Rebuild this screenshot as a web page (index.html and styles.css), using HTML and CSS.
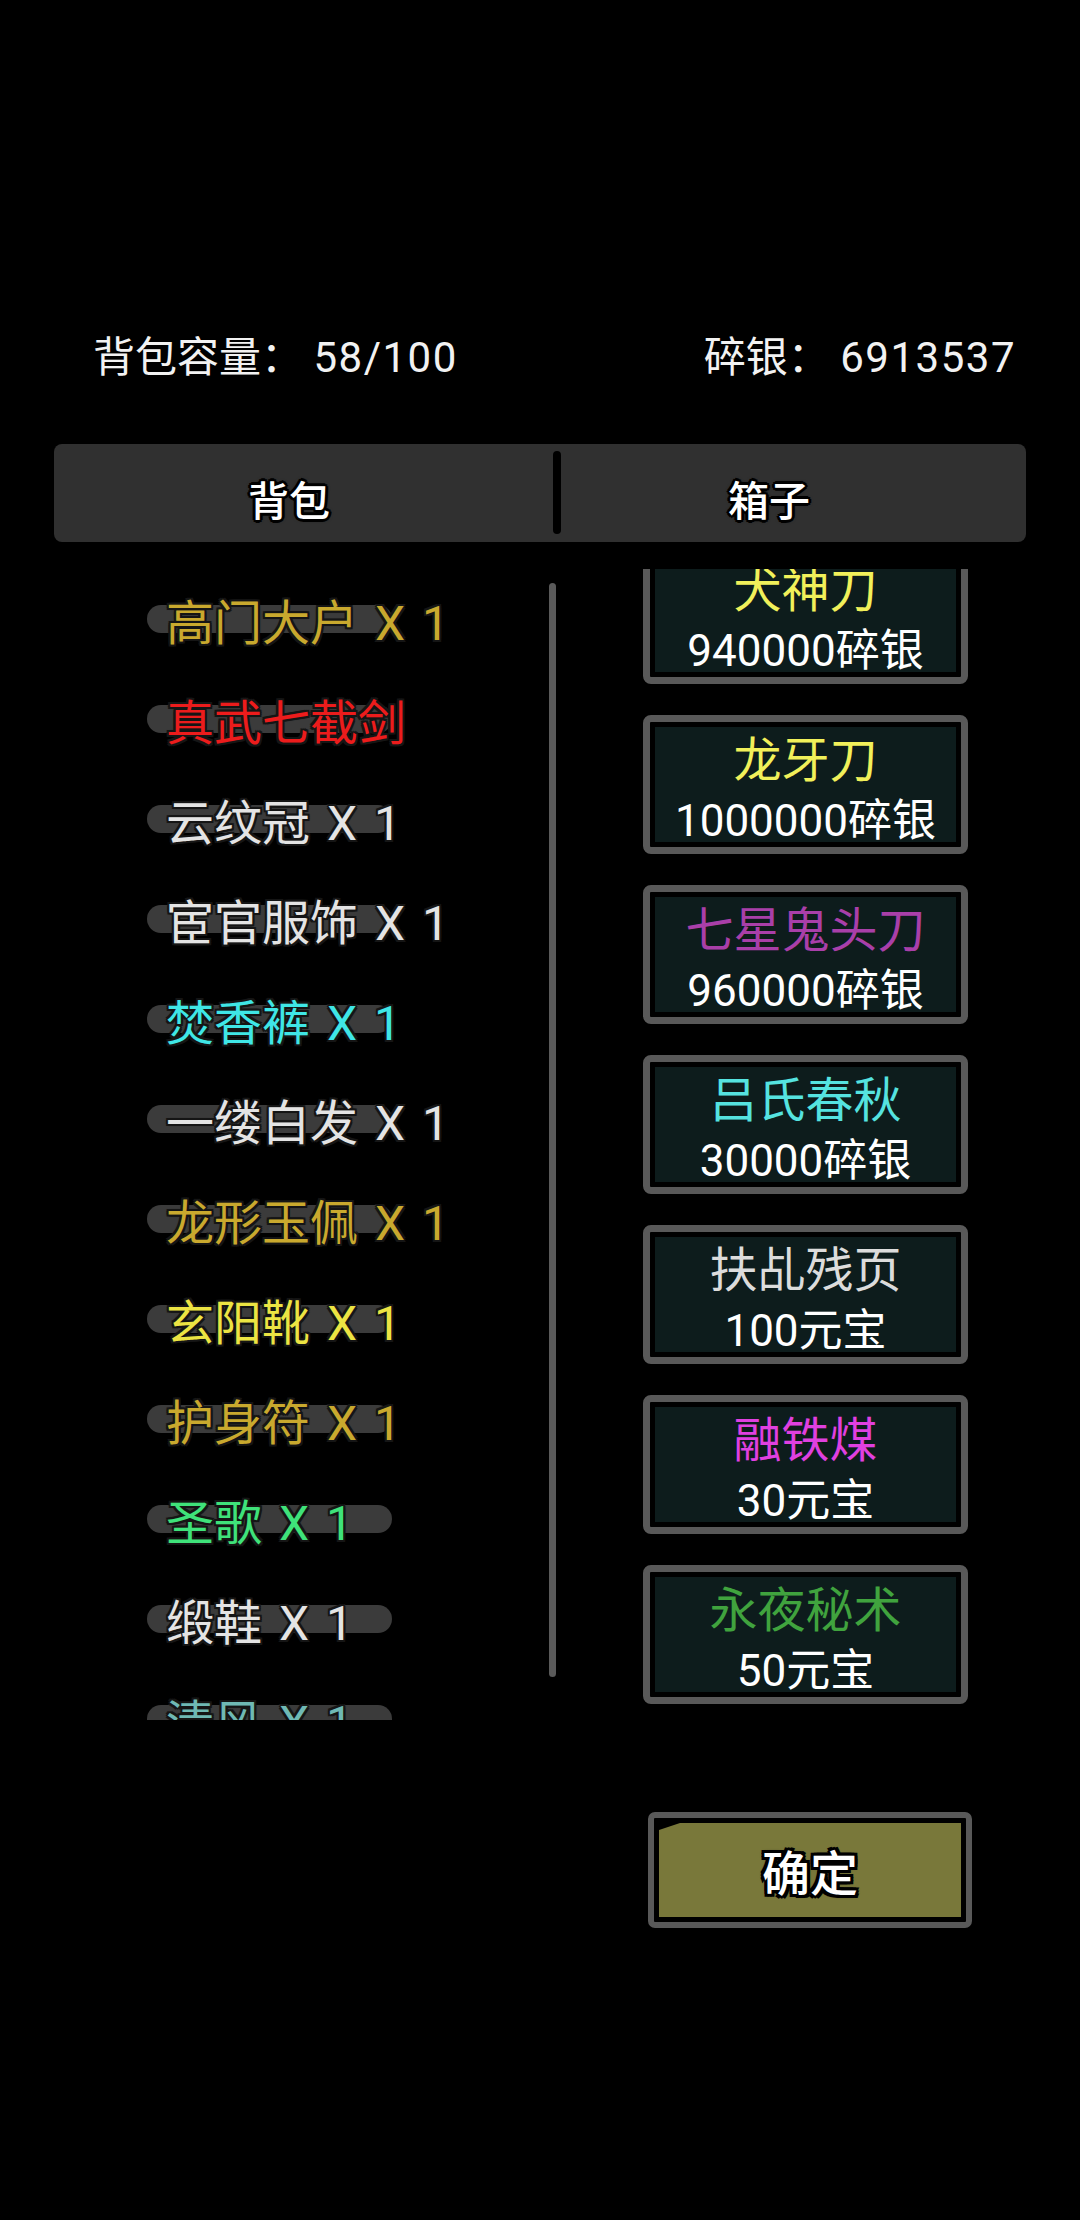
FILE: index.html
```html
<!DOCTYPE html>
<html lang="zh-CN">
<head>
  <meta charset="UTF-8" />
  <meta name="viewport" content="width=device-width, initial-scale=1.0"/>
  <title>背包</title>
  <link rel="stylesheet" href="styles.css">
</head>
<body>
  <div class="screen">
    <div class="header">
      <span>背包容量： <span class="num">58/100</span></span>
      <span>碎银： <span class="num">6913537</span></span>
    </div>

    <div class="tabs">
      <div class="tab tab-bag">背包</div>
      <div class="tab-divider"></div>
      <div class="tab tab-box">箱子</div>
    </div>

    <div class="content">
      <div class="bag-list">
        <div class="bag-item gold">高门大户 X 1</div>
        <div class="bag-item red">真武七截剑</div>
        <div class="bag-item white">云纹冠 X 1</div>
        <div class="bag-item white">宦官服饰 X 1</div>
        <div class="bag-item cyan">焚香裤 X 1</div>
        <div class="bag-item white">一缕白发 X 1</div>
        <div class="bag-item gold">龙形玉佩 X 1</div>
        <div class="bag-item yellow">玄阳靴 X 1</div>
        <div class="bag-item gold">护身符 X 1</div>
        <div class="bag-item green">圣歌 X 1</div>
        <div class="bag-item white">缎鞋 X 1</div>
        <div class="bag-item teal">清风 X 1</div>
      </div>
      <div class="scrollbar"></div>

      <div class="box-list">
        <div class="box-track">
          <div class="card"><div class="card-inner">
            <div class="card-name c-yellow">犬神刀</div>
            <div class="card-price">940000碎银</div>
          </div></div>
          <div class="card"><div class="card-inner">
            <div class="card-name c-yellow">龙牙刀</div>
            <div class="card-price">1000000碎银</div>
          </div></div>
          <div class="card"><div class="card-inner">
            <div class="card-name c-purple">七星鬼头刀</div>
            <div class="card-price">960000碎银</div>
          </div></div>
          <div class="card"><div class="card-inner">
            <div class="card-name c-cyan">吕氏春秋</div>
            <div class="card-price">30000碎银</div>
          </div></div>
          <div class="card"><div class="card-inner">
            <div class="card-name c-white">扶乩残页</div>
            <div class="card-price">100元宝</div>
          </div></div>
          <div class="card"><div class="card-inner">
            <div class="card-name c-magenta">融铁煤</div>
            <div class="card-price">30元宝</div>
          </div></div>
          <div class="card"><div class="card-inner">
            <div class="card-name c-green">永夜秘术</div>
            <div class="card-price">50元宝</div>
          </div></div>
        </div>
      </div>
    </div>

    <div class="footer">
      <button class="confirm-btn"><span class="confirm-face">确定</span></button>
    </div>
  </div>
</body>
</html>
```

FILE: styles.css
```css
body {
  margin: 0;
  padding: 0;
  background-color: #000;
  font-family: Roboto, "Noto Sans CJK SC", sans-serif;
  color: #fff;
}

.screen {
  width: 1080px;
  height: 2220px;
  overflow: hidden;
}

.header {
  display: flex;
  justify-content: space-between;
  padding: 333px 64px 0 93px;
  font-size: 42px;
  line-height: 50px;
  color: #f2f2f2;
}

.header .num {
  letter-spacing: 1.5px;
}

.tabs {
  display: flex;
  align-items: center;
  margin: 61px 54px 0;
  height: 98px;
  background-color: #303030;
  border-radius: 8px;
}

.tab {
  height: 100%;
  display: flex;
  align-items: center;
  justify-content: center;
  box-sizing: border-box;
  padding-top: 10px;
  font-size: 41px;
  font-weight: 500;
  color: #fff;
  text-shadow: 3px 0 0 #000, -3px 0 0 #000, 0 3px 0 #000, 0 -3px 0 #000,
    2px 2px 0 #000, -2px -2px 0 #000, 2px -2px 0 #000, -2px 2px 0 #000,
    0 0 4px #000;
}

.tab-bag {
  width: 499px;
  padding-right: 29px;
}

.tab-box {
  flex: 1;
  padding-right: 49px;
}

.tab-divider {
  width: 8px;
  height: 83px;
  margin-top: -1px;
  background-color: #000;
  border-radius: 4px;
}

.content {
  display: flex;
  margin-top: 27px;
  height: 1151px;
}

.bag-list {
  width: 549px;
  height: 100%;
  overflow: hidden;
}

.bag-item {
  position: relative;
  z-index: 0;
  height: 100px;
  display: flex;
  align-items: center;
  padding-left: 166px;
  font-size: 48px;
  word-spacing: 5px;
  white-space: pre;
  text-shadow: 2px 0 0 #151515, -2px 0 0 #151515, 0 2px 0 #151515, 0 -2px 0 #151515,
    2px 2px 0 #151515, -2px -2px 0 #151515, 2px -2px 0 #151515, -2px 2px 0 #151515,
    0 0 3px #000;
}

.bag-item::before {
  content: "";
  position: absolute;
  z-index: -1;
  left: 147px;
  top: 36px;
  width: 245px;
  height: 28px;
  border-radius: 14px;
  background-color: #3b3b3b;
}

.gold { color: #c9a92e; }
.red { color: #ec1c1c; }
.white { color: #e4e4e4; }
.cyan { color: #3fe6e6; }
.yellow { color: #ece443; }
.green { color: #3fe27a; }
.teal { color: #6fb9b4; }

.scrollbar {
  width: 7px;
  height: 1094px;
  margin-top: 14px;
  background-color: #5a5a5a;
  border-radius: 4px;
}

.box-list {
  width: 325px;
  margin-left: 87px;
  height: 100%;
  overflow: hidden;
}

.box-track {
  display: flex;
  flex-direction: column;
  gap: 31px;
  margin-top: -24px;
}

.card {
  border: 7px solid #595959;
  border-radius: 8px;
  padding: 5px;
  background-color: #000;
}

.card-inner {
  height: 115px;
  box-sizing: border-box;
  padding-top: 4px;
  background-color: #0d1c1c;
  text-align: center;
  line-height: 60px;
  white-space: nowrap;
}

.card-name {
  font-size: 48px;
}

.card-price {
  font-size: 44px;
  color: #fff;
}

.c-yellow { color: #f1f05a; }
.c-purple { color: #a93fa9; }
.c-cyan { color: #55e3e0; }
.c-white { color: #dcdcdc; }
.c-magenta { color: #e040e0; }
.c-green { color: #40a33e; }

.footer {
  margin-top: 92px;
  padding-left: 648px;
}

.confirm-btn {
  display: block;
  width: 324px;
  height: 116px;
  box-sizing: border-box;
  border: 6px solid #595959;
  border-radius: 7px;
  padding: 5px;
  background-color: #000;
  cursor: pointer;
}

.confirm-face {
  display: flex;
  align-items: center;
  justify-content: center;
  height: 100%;
  background-color: #79783a;
  clip-path: polygon(21px 0, 100% 0, 100% 100%, 0 100%, 0 7px);
  font-family: Roboto, "Noto Sans CJK SC", sans-serif;
  font-size: 48px;
  font-weight: 500;
  color: #fff;
  text-shadow: 3px 0 0 #000, -3px 0 0 #000, 0 3px 0 #000, 0 -3px 0 #000,
    3px 3px 0 #000, -3px -3px 0 #000, 3px -3px 0 #000, -3px 3px 0 #000,
    0 0 4px #000;
}
```
